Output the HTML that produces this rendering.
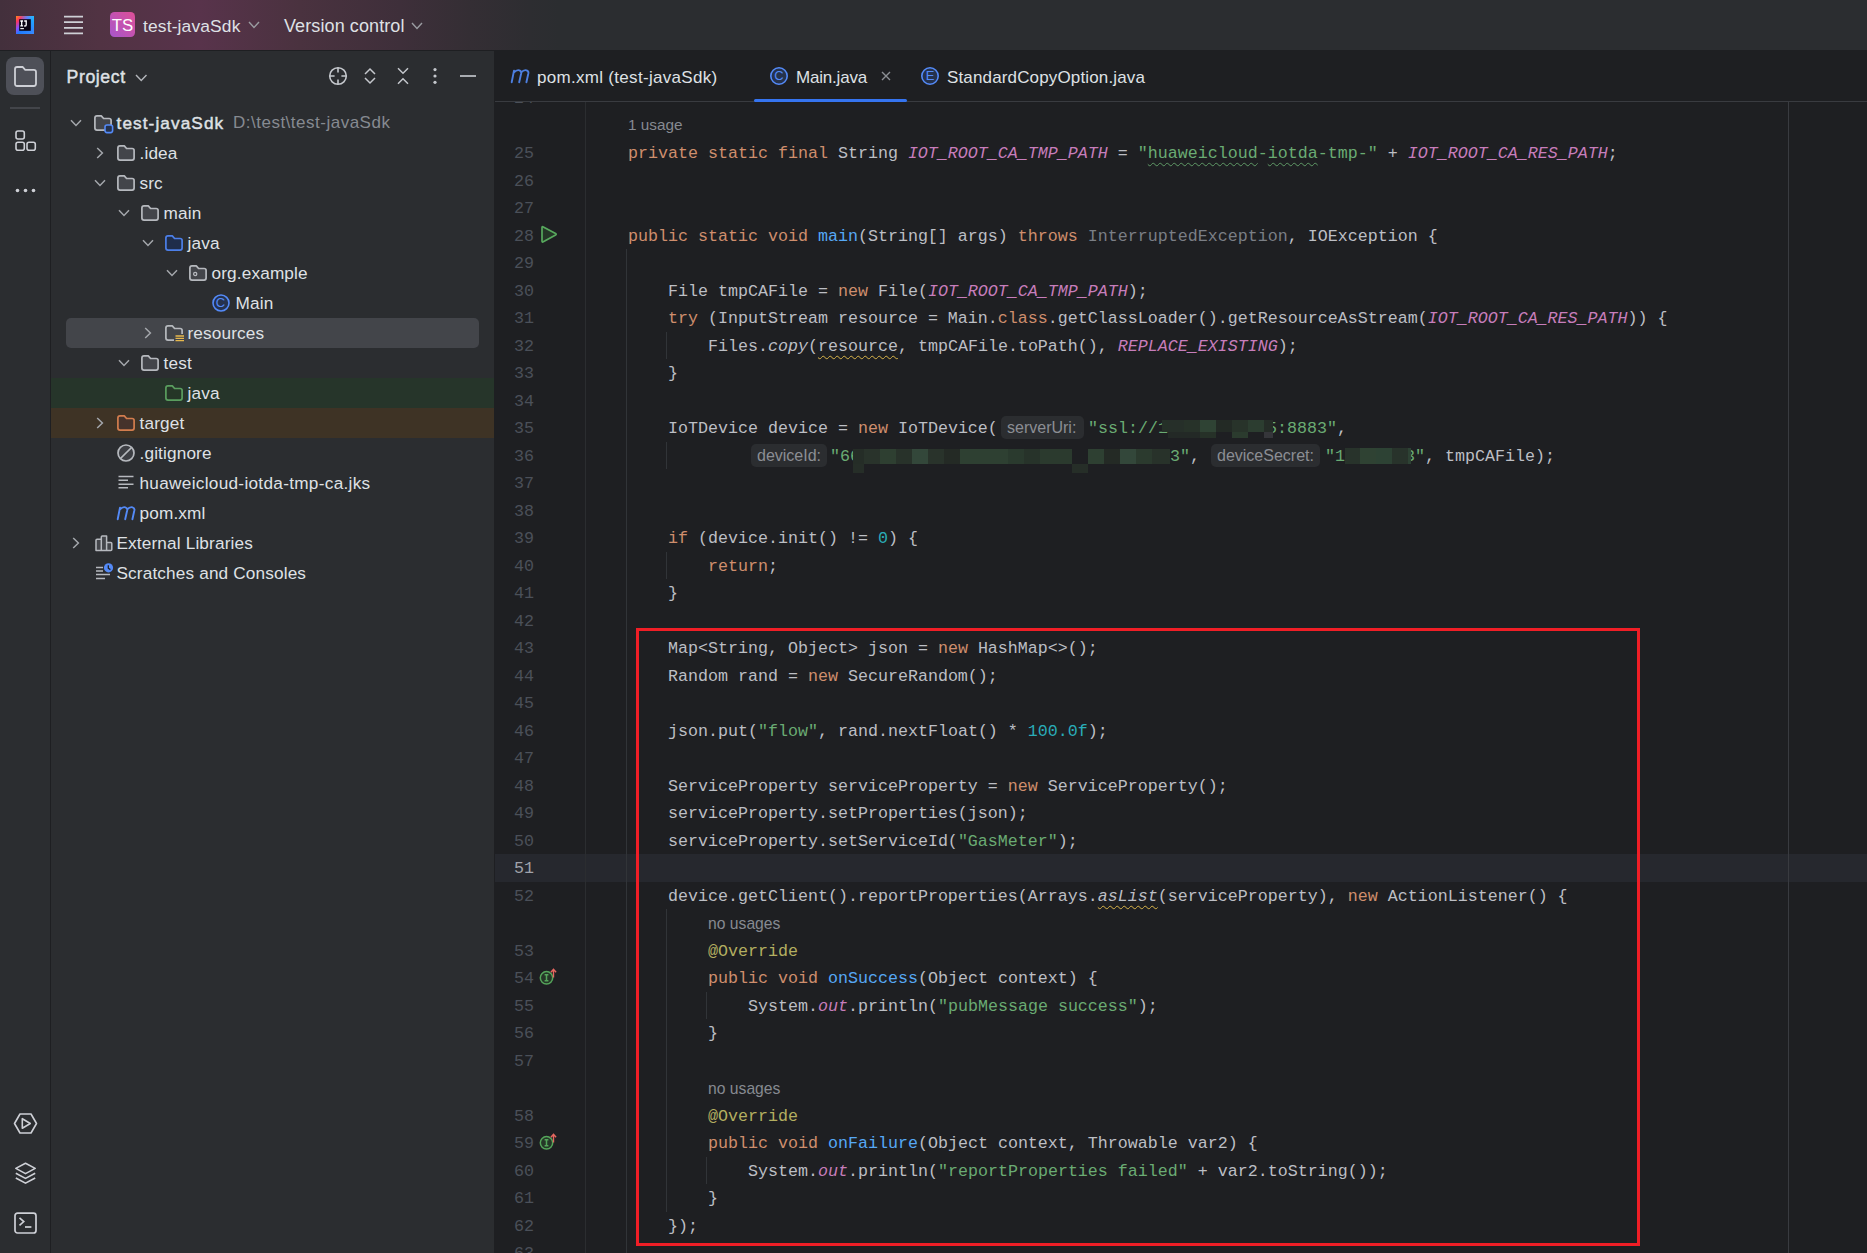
<!DOCTYPE html><html><head><meta charset="utf-8"><style>
*{margin:0;padding:0;box-sizing:border-box}
html,body{width:1867px;height:1253px;overflow:hidden;background:#1e1f22}
body{position:relative;font-family:"Liberation Sans",sans-serif;color:#dfe1e5}
div,span.a,svg{position:absolute}
svg{overflow:visible}
.ui{white-space:pre;font-size:17.2px;line-height:30px;color:#dfe1e5;letter-spacing:0.15px}
.cd{white-space:pre;font-family:"Liberation Mono",monospace;font-size:16.67px;line-height:27.5px;color:#bcbec4;height:27.5px}
.ln{white-space:pre;font-family:"Liberation Mono",monospace;font-size:16.67px;line-height:27.5px;color:#4b5059;width:60px;text-align:right;left:474px}
.k{color:#cf8e6d}.s{color:#6aab73}.n{color:#2aacb8}.st{color:#c77dbb;font-style:italic}.f{color:#56a8f5}.an{color:#b3ae60}.gr{color:#7a7e85}.it{font-style:italic}
.ug{text-decoration:underline wavy #5f9a66;text-decoration-thickness:1px;text-underline-offset:4px}
.uy{text-decoration:underline wavy #d9b44a;text-decoration-thickness:1px;text-underline-offset:4px}
.hint{white-space:pre;font-size:16px;line-height:23px;height:23px;color:#8b8e94;background:#2b2d30;border-radius:5px;padding-left:6px}
.cv{white-space:pre;font-size:15.3px;line-height:27.5px;color:#868a91}
.guide{width:1px;background:#313438}
</style></head><body>
<div style="left:0;top:0;width:1867px;height:50px;background:linear-gradient(90deg,#43303c 0px,#513343 100px,#58334b 200px,#4a323f 300px,#3e2f3a 400px,#342e34 470px,#2d2d31 530px,#2b2d30 560px)"></div>
<div style="left:0;top:50px;width:1867px;height:1px;background:#1e1f22"></div>
<div style="left:0;top:51px;width:50px;height:1202px;background:#2b2d30"></div>
<div style="left:50px;top:51px;width:1px;height:1202px;background:#1e1f22"></div>
<div style="left:51px;top:51px;width:443px;height:1202px;background:#2b2d30"></div>
<div style="left:494px;top:51px;width:1373px;height:1202px;background:#1e1f22"></div>
<div style="left:495px;top:854.25px;width:1372px;height:27.5px;background:#26282e"></div>
<div style="left:585px;top:102px;width:1px;height:1151px;background:#2b2d30"></div>
<div style="left:1788px;top:102px;width:1px;height:1151px;background:#393b40"></div>
<div class="guide" style="left:626px;top:249.25px;height:1023.0px"></div>
<div class="guide" style="left:666px;top:331.75px;height:27.5px"></div>
<div class="guide" style="left:666px;top:441.75px;height:27.5px"></div>
<div class="guide" style="left:666px;top:551.75px;height:27.5px"></div>
<div class="guide" style="left:666px;top:909.25px;height:302.5px"></div>
<div class="guide" style="left:706px;top:991.75px;height:27.5px"></div>
<div class="guide" style="left:706px;top:1156.75px;height:27.5px"></div>
<div class="ln" style="top:85.25px;color:#4b5059">24</div>
<div class="ln" style="top:140.25px;color:#4b5059">25</div>
<div class="ln" style="top:167.75px;color:#4b5059">26</div>
<div class="ln" style="top:195.25px;color:#4b5059">27</div>
<div class="ln" style="top:222.75px;color:#4b5059">28</div>
<div class="ln" style="top:250.25px;color:#4b5059">29</div>
<div class="ln" style="top:277.75px;color:#4b5059">30</div>
<div class="ln" style="top:305.25px;color:#4b5059">31</div>
<div class="ln" style="top:332.75px;color:#4b5059">32</div>
<div class="ln" style="top:360.25px;color:#4b5059">33</div>
<div class="ln" style="top:387.75px;color:#4b5059">34</div>
<div class="ln" style="top:415.25px;color:#4b5059">35</div>
<div class="ln" style="top:442.75px;color:#4b5059">36</div>
<div class="ln" style="top:470.25px;color:#4b5059">37</div>
<div class="ln" style="top:497.75px;color:#4b5059">38</div>
<div class="ln" style="top:525.25px;color:#4b5059">39</div>
<div class="ln" style="top:552.75px;color:#4b5059">40</div>
<div class="ln" style="top:580.25px;color:#4b5059">41</div>
<div class="ln" style="top:607.75px;color:#4b5059">42</div>
<div class="ln" style="top:635.25px;color:#4b5059">43</div>
<div class="ln" style="top:662.75px;color:#4b5059">44</div>
<div class="ln" style="top:690.25px;color:#4b5059">45</div>
<div class="ln" style="top:717.75px;color:#4b5059">46</div>
<div class="ln" style="top:745.25px;color:#4b5059">47</div>
<div class="ln" style="top:772.75px;color:#4b5059">48</div>
<div class="ln" style="top:800.25px;color:#4b5059">49</div>
<div class="ln" style="top:827.75px;color:#4b5059">50</div>
<div class="ln" style="top:855.25px;color:#a1a3ab">51</div>
<div class="ln" style="top:882.75px;color:#4b5059">52</div>
<div class="ln" style="top:937.75px;color:#4b5059">53</div>
<div class="ln" style="top:965.25px;color:#4b5059">54</div>
<div class="ln" style="top:992.75px;color:#4b5059">55</div>
<div class="ln" style="top:1020.25px;color:#4b5059">56</div>
<div class="ln" style="top:1047.75px;color:#4b5059">57</div>
<div class="ln" style="top:1102.75px;color:#4b5059">58</div>
<div class="ln" style="top:1130.25px;color:#4b5059">59</div>
<div class="ln" style="top:1157.75px;color:#4b5059">60</div>
<div class="ln" style="top:1185.25px;color:#4b5059">61</div>
<div class="ln" style="top:1212.75px;color:#4b5059">62</div>
<div class="ln" style="top:1240.25px;color:#4b5059">63</div>
<div class="cv" style="left:628px;top:111.25px;font-size:15.3px">1 usage</div>
<div class="cd" style="left:628px;top:140.25px"><span class="k">private static final </span>String <span class="st">IOT_ROOT_CA_TMP_PATH</span> = <span class="s">"<span class="ug">huaweicloud</span>-<span class="ug">iotda</span>-tmp-"</span> + <span class="st">IOT_ROOT_CA_RES_PATH</span>;</div>
<div class="cd" style="left:628px;top:222.75px"><span class="k">public static void </span><span class="f">main</span>(String[] args) <span class="k">throws </span><span class="gr">InterruptedException</span>, IOException {</div>
<div class="cd" style="left:668px;top:277.75px">File tmpCAFile = <span class="k">new </span>File(<span class="st">IOT_ROOT_CA_TMP_PATH</span>);</div>
<div class="cd" style="left:668px;top:305.25px"><span class="k">try </span>(InputStream resource = Main.<span class="k">class</span>.getClassLoader().getResourceAsStream(<span class="st">IOT_ROOT_CA_RES_PATH</span>)) {</div>
<div class="cd" style="left:708px;top:332.75px">Files.<span class="it">copy</span>(<span class="uy">resource</span>, tmpCAFile.toPath(), <span class="st">REPLACE_EXISTING</span>);</div>
<div class="cd" style="left:668px;top:360.25px">}</div>
<div class="cd" style="left:668px;top:415.25px">IoTDevice device = <span class="k">new </span>IoTDevice(</div>
<div class="cd" style="left:1088px;top:415.25px"><span class="s">"ssl://1</span></div>
<div class="cd" style="left:1267px;top:415.25px"><span class="s">5:8883"</span>,</div>
<div class="cd" style="left:830px;top:442.75px"><span class="s">"66</span></div>
<div class="cd" style="left:1170px;top:442.75px"><span class="s">3"</span>, </div>
<div class="cd" style="left:1325px;top:442.75px"><span class="s">"1</span></div>
<div class="cd" style="left:1405px;top:442.75px"><span class="s">3"</span>, tmpCAFile);</div>
<div class="cd" style="left:668px;top:525.25px"><span class="k">if </span>(device.init() != <span class="n">0</span>) {</div>
<div class="cd" style="left:708px;top:552.75px"><span class="k">return</span>;</div>
<div class="cd" style="left:668px;top:580.25px">}</div>
<div class="cd" style="left:668px;top:635.25px">Map&lt;String, Object&gt; json = <span class="k">new </span>HashMap&lt;&gt;();</div>
<div class="cd" style="left:668px;top:662.75px">Random rand = <span class="k">new </span>SecureRandom();</div>
<div class="cd" style="left:668px;top:717.75px">json.put(<span class="s">"flow"</span>, rand.nextFloat() * <span class="n">100.0f</span>);</div>
<div class="cd" style="left:668px;top:772.75px">ServiceProperty serviceProperty = <span class="k">new </span>ServiceProperty();</div>
<div class="cd" style="left:668px;top:800.25px">serviceProperty.setProperties(json);</div>
<div class="cd" style="left:668px;top:827.75px">serviceProperty.setServiceId(<span class="s">"GasMeter"</span>);</div>
<div class="cd" style="left:668px;top:882.75px">device.getClient().reportProperties(Arrays.<span class="it uy">asList</span>(serviceProperty), <span class="k">new </span>ActionListener() {</div>
<div class="cv" style="left:708px;top:910.25px;font-size:15.7px">no usages</div>
<div class="cd" style="left:708px;top:937.75px"><span class="an">@Override</span></div>
<div class="cd" style="left:708px;top:965.25px"><span class="k">public void </span><span class="f">onSuccess</span>(Object context) {</div>
<div class="cd" style="left:748px;top:992.75px">System.<span class="st">out</span>.println(<span class="s">"pubMessage success"</span>);</div>
<div class="cd" style="left:708px;top:1020.25px">}</div>
<div class="cv" style="left:708px;top:1075.25px;font-size:15.7px">no usages</div>
<div class="cd" style="left:708px;top:1102.75px"><span class="an">@Override</span></div>
<div class="cd" style="left:708px;top:1130.25px"><span class="k">public void </span><span class="f">onFailure</span>(Object context, Throwable var2) {</div>
<div class="cd" style="left:748px;top:1157.75px">System.<span class="st">out</span>.println(<span class="s">"reportProperties failed"</span> + var2.toString());</div>
<div class="cd" style="left:708px;top:1185.25px">}</div>
<div class="cd" style="left:668px;top:1212.75px">});</div>
<div class="hint" style="left:1001px;top:416.0px;width:83px">serverUri:</div>
<div class="hint" style="left:751px;top:443.5px;width:76px">deviceId:</div>
<div class="hint" style="left:1211px;top:443.5px;width:109px">deviceSecret:</div>
<div style="left:1162px;top:420px;width:6px;height:12px;background:#253028"></div>
<div style="left:1168px;top:420px;width:16px;height:12px;background:#262f29"></div>
<div style="left:1184px;top:420px;width:16px;height:12px;background:#273229"></div>
<div style="left:1200px;top:420px;width:16px;height:12px;background:#2f4334"></div>
<div style="left:1216px;top:420px;width:16px;height:12px;background:#232a25"></div>
<div style="left:1232px;top:420px;width:16px;height:12px;background:#28332a"></div>
<div style="left:1248px;top:420px;width:16px;height:12px;background:#2c3d30"></div>
<div style="left:1264px;top:420px;width:9px;height:12px;background:#252c27"></div>
<div style="left:1168px;top:432px;width:16px;height:6px;background:#232926"></div>
<div style="left:1184px;top:432px;width:16px;height:6px;background:#232926"></div>
<div style="left:1200px;top:432px;width:16px;height:6px;background:#263128"></div>
<div style="left:1232px;top:432px;width:16px;height:6px;background:#2b3b2e"></div>
<div style="left:1264px;top:432px;width:9px;height:6px;background:#35363a"></div>
<div style="left:853px;top:449px;width:11px;height:15px;background:#252d27"></div>
<div style="left:864px;top:449px;width:16px;height:15px;background:#29332b"></div>
<div style="left:880px;top:449px;width:16px;height:15px;background:#2e3f31"></div>
<div style="left:896px;top:449px;width:16px;height:15px;background:#28322a"></div>
<div style="left:912px;top:449px;width:16px;height:15px;background:#33473a"></div>
<div style="left:928px;top:449px;width:16px;height:15px;background:#29332b"></div>
<div style="left:944px;top:449px;width:16px;height:15px;background:#242a25"></div>
<div style="left:960px;top:449px;width:16px;height:15px;background:#2e4032"></div>
<div style="left:976px;top:449px;width:16px;height:15px;background:#2e4032"></div>
<div style="left:992px;top:449px;width:16px;height:15px;background:#2e4032"></div>
<div style="left:1008px;top:449px;width:16px;height:15px;background:#2a3a2e"></div>
<div style="left:1024px;top:449px;width:16px;height:15px;background:#27332a"></div>
<div style="left:1040px;top:449px;width:16px;height:15px;background:#2b3a2e"></div>
<div style="left:1056px;top:449px;width:16px;height:15px;background:#2b3a2e"></div>
<div style="left:1088px;top:449px;width:16px;height:15px;background:#2e4032"></div>
<div style="left:1104px;top:449px;width:16px;height:15px;background:#242a25"></div>
<div style="left:1120px;top:449px;width:16px;height:15px;background:#33473a"></div>
<div style="left:1136px;top:449px;width:16px;height:15px;background:#2b3a2e"></div>
<div style="left:1152px;top:449px;width:18px;height:15px;background:#28322a"></div>
<div style="left:853px;top:464px;width:11px;height:9px;background:#262e28"></div>
<div style="left:1072px;top:464px;width:16px;height:9px;background:#262e28"></div>
<div style="left:1345px;top:448px;width:15px;height:16px;background:#28332b"></div>
<div style="left:1360px;top:448px;width:16px;height:16px;background:#2f4233"></div>
<div style="left:1376px;top:448px;width:16px;height:16px;background:#2d4234"></div>
<div style="left:1392px;top:448px;width:16px;height:16px;background:#28332b"></div>
<div style="left:1408px;top:448px;width:3px;height:16px;background:#2d4234"></div>
<div style="left:494px;top:51px;width:1373px;height:50px;background:#1e1f22"></div>
<div style="left:495px;top:101px;width:1372px;height:1px;background:#393b40"></div>
<div style="left:754px;top:99px;width:153px;height:3px;background:#3574f0;border-radius:2px"></div>
<svg style="left:510px;top:69px" width="21" height="15" viewBox="0 0 21 15" ><path d="M1.7 13.2L4 1.6M4 3.4Q6.6 0.6 9.3 1.3Q11.6 2 11.2 4.2L9.2 13.2M11.2 3.4Q13.8 0.6 16.5 1.3Q18.8 2 18.4 4.2L16.4 13.2" fill="none" stroke="#4d7fe0" stroke-width="1.9" stroke-linecap="round" stroke-linejoin="round"/></svg>
<div class="ui" style="left:537px;top:63px;line-height:30px;font-size:17px;letter-spacing:0.3px">pom.xml (test-javaSdk)</div>
<svg style="left:768px;top:65px" width="22" height="22" viewBox="0 0 22 22" ><circle cx="11" cy="11" r="8.2" fill="#25324d" stroke="#548af7" stroke-width="1.6"/></svg>
<div style="left:768px;top:65px;width:22px;height:22px;line-height:22px;text-align:center;font-size:13px;color:#548af7">C</div>
<div class="ui" style="left:796px;top:63px;line-height:30px;font-size:17px;letter-spacing:-0.2px">Main.java</div>
<svg style="left:881px;top:71px" width="10" height="10" viewBox="0 0 10 10" ><path d="M1 1L9 9M9 1L1 9" stroke="#8c8f94" stroke-width="1.4"/></svg>
<svg style="left:919px;top:65px" width="22" height="22" viewBox="0 0 22 22" ><circle cx="11" cy="11" r="8.2" fill="#25324d" stroke="#548af7" stroke-width="1.6"/></svg>
<div style="left:919px;top:65px;width:22px;height:22px;line-height:22px;text-align:center;font-size:13px;color:#548af7">E</div>
<div class="ui" style="left:947px;top:63px;line-height:30px;font-size:17px;letter-spacing:0.15px">StandardCopyOption.java</div>
<svg style="left:16px;top:16px" width="18" height="18" viewBox="0 0 18 18" ><defs><linearGradient id="ijg" x1="0" y1="0" x2="1" y2="1"><stop offset="0" stop-color="#ff8d17"/><stop offset=".18" stop-color="#fe3560"/><stop offset=".38" stop-color="#8a4fff"/><stop offset=".55" stop-color="#1e7bff"/><stop offset="1" stop-color="#3a8cff"/></linearGradient><linearGradient id="ijg2" x1="1" y1="0" x2="0" y2="1"><stop offset="0" stop-color="#22c7ff" stop-opacity=".9"/><stop offset=".45" stop-color="#22c7ff" stop-opacity="0"/></linearGradient></defs><rect x="0" y="0" width="18" height="18" fill="url(#ijg)"/><rect x="0" y="0" width="18" height="18" fill="url(#ijg2)"/><rect x="3.2" y="3.2" width="11.6" height="11.6" fill="#0a0410"/><path d="M4.3 5H7.1M5.7 5V9.9M4.3 9.9H7.1M8.2 5H10.9M10.2 5V8.9Q10.2 10 9.1 10H8.2" stroke="#fff" stroke-width="1.3" fill="none"/><rect x="4.3" y="12.1" width="3.6" height="1.1" fill="#fff"/></svg>
<svg style="left:63px;top:15px" width="21" height="21" viewBox="0 0 21 21" ><path d="M1 1.6H20M1 7.2H20M1 12.8H20M1 18.4H20" stroke="#ced0d6" stroke-width="1.8"/></svg>
<svg style="left:110px;top:12px" width="25" height="25" viewBox="0 0 25 25" ><defs><linearGradient id="tsg" x1="0" y1="1" x2="1" y2="0"><stop offset="0" stop-color="#a756cc"/><stop offset="1" stop-color="#de4f96"/></linearGradient></defs><rect width="25" height="25" rx="4.5" fill="url(#tsg)"/></svg>
<div style="left:110px;top:12px;width:25px;height:25px;line-height:27px;text-align:center;font-size:16.8px;color:#fff">TS</div>
<div class="ui" style="left:143px;top:11px;font-size:17.4px;letter-spacing:0.15px">test-javaSdk</div>
<svg style="left:248px;top:21.3px" width="12" height="7.5" viewBox="0 0 12 7.5" ><path d="M1 1L6.0 6.5L11 1" fill="none" stroke="#9a9ca1" stroke-width="1.4"/></svg>
<div class="ui" style="left:284px;top:11px;font-size:18px;letter-spacing:0.1px">Version control</div>
<svg style="left:411px;top:21.8px" width="12" height="7.5" viewBox="0 0 12 7.5" ><path d="M1 1L6.0 6.5L11 1" fill="none" stroke="#9a9ca1" stroke-width="1.4"/></svg>
<div style="left:6px;top:57px;width:38px;height:38px;border-radius:8px;background:#4e5058"></div>
<svg style="left:14px;top:66px" width="23" height="21" viewBox="0 0 23 21" ><path d="M1 3.2Q1 1 3.2 1H8.6L11.2 3.9H19.8Q22 3.9 22 6.1V17.8Q22 20 19.8 20H3.2Q1 20 1 17.8Z" fill="none" stroke="#ced0d6" stroke-width="1.8"/></svg>
<div style="left:10px;top:107px;width:30px;height:2px;background:#43454a"></div>
<svg style="left:15px;top:130px" width="21" height="21" viewBox="0 0 21 21" ><rect x="1" y="1" width="8.3" height="8" rx="2" fill="none" stroke="#ced0d6" stroke-width="1.6"/><rect x="1" y="12.2" width="8.3" height="8" rx="2" fill="none" stroke="#ced0d6" stroke-width="1.6"/><rect x="12" y="12.2" width="8.3" height="8" rx="2" fill="none" stroke="#ced0d6" stroke-width="1.6"/></svg>
<svg style="left:14px;top:187px" width="24" height="7" viewBox="0 0 24 7" ><circle cx="3.5" cy="3.5" r="1.8" fill="#ced0d6"/><circle cx="11.5" cy="3.5" r="1.8" fill="#ced0d6"/><circle cx="19.5" cy="3.5" r="1.8" fill="#ced0d6"/></svg>
<svg style="left:13px;top:1113px" width="25" height="22" viewBox="0 0 25 22" ><path d="M7 1H18L23.5 10.5L18 20H7L1.5 10.5Z" fill="none" stroke="#ced0d6" stroke-width="1.6" stroke-linejoin="round"/><path d="M9.3 5.7V15.3L17.3 10.5Z" fill="none" stroke="#ced0d6" stroke-width="1.6" stroke-linejoin="round"/></svg>
<svg style="left:14px;top:1162px" width="23" height="23" viewBox="0 0 23 23" ><path d="M11.5 1.2L21.2 6.4L11.5 11.6L1.8 6.4Z" fill="none" stroke="#ced0d6" stroke-width="1.6" stroke-linejoin="round"/><path d="M1.8 11.2L11.5 16.4L21.2 11.2M1.8 16L11.5 21.2L21.2 16" fill="none" stroke="#ced0d6" stroke-width="1.6"/></svg>
<svg style="left:14px;top:1212px" width="23" height="23" viewBox="0 0 23 23" ><rect x="1" y="1.2" width="21" height="19.8" rx="2.5" fill="none" stroke="#ced0d6" stroke-width="1.7"/><path d="M5.5 5.8L9.8 9.6L5.5 13.4" fill="none" stroke="#ced0d6" stroke-width="1.6"/><path d="M11 15H17.4" stroke="#ced0d6" stroke-width="1.7"/></svg>
<div class="ui" style="left:66.5px;top:62px;font-size:17.7px;letter-spacing:0.6px;-webkit-text-stroke:0.45px #dfe1e5">Project</div>
<svg style="left:134.5px;top:74px" width="12.5" height="7.5" viewBox="0 0 12.5 7.5" ><path d="M1 1L6.25 6.5L11.5 1" fill="none" stroke="#b4b7bc" stroke-width="1.4"/></svg>
<svg style="left:328px;top:66px" width="20" height="20" viewBox="0 0 20 20" ><circle cx="10" cy="10" r="8.3" fill="none" stroke="#c4c7cc" stroke-width="1.6"/><path d="M10 1.7V6.6M10 13.4V18.3M1.7 10H6.6M13.4 10H18.3" stroke="#c4c7cc" stroke-width="1.6"/></svg>
<svg style="left:364px;top:68px" width="12" height="16" viewBox="0 0 12 16" ><path d="M1 6L6 1L11 6M1 10L6 15L11 10" fill="none" stroke="#c4c7cc" stroke-width="1.5"/></svg>
<svg style="left:397px;top:67px" width="12" height="18" viewBox="0 0 12 18" ><path d="M1 1.2L6 6.2L11 1.2M1 16.8L6 11.8L11 16.8" fill="none" stroke="#c4c7cc" stroke-width="1.5"/></svg>
<svg style="left:432px;top:67px" width="6" height="18" viewBox="0 0 6 18" ><circle cx="3" cy="2.6" r="1.6" fill="#c4c7cc"/><circle cx="3" cy="9" r="1.6" fill="#c4c7cc"/><circle cx="3" cy="15.3" r="1.6" fill="#c4c7cc"/></svg>
<div style="left:460px;top:75px;width:16px;height:2px;background:#a9acb1"></div>
<div style="left:66px;top:318px;width:413px;height:30px;background:#43454a;border-radius:5px"></div>
<div style="left:51px;top:378px;width:443px;height:30px;background:#26352a"></div>
<div style="left:51px;top:408px;width:443px;height:30px;background:#3e3325"></div>
<svg style="left:69.5px;top:119px" width="12" height="8" viewBox="0 0 12 8" ><path d="M1 1.2L6 6.4L11 1.2" fill="none" stroke="#a4a7ac" stroke-width="1.5"/></svg>
<svg style="left:94px;top:115px" width="18" height="16" viewBox="0 0 18 16" ><path d="M0.9 3Q0.9 0.9 3 0.9H7.3L9.6 3.5H15.1Q17.1 3.5 17.1 5.5V13.1Q17.1 15.1 15.1 15.1H3Q0.9 15.1 0.9 13.1Z" fill="#43454a" stroke="#b6b9be" stroke-width="1.7" stroke-linejoin="round"/></svg>
<svg style="left:104px;top:124px" width="10" height="10" viewBox="0 0 10 10" ><rect x="1" y="1" width="7.6" height="7.6" rx="2" fill="#25324d" stroke="#548af7" stroke-width="1.6"/></svg>
<div class="ui" style="left:116.5px;top:108px;letter-spacing:1.1px;-webkit-text-stroke:0.45px #dfe1e5">test-javaSdk</div>
<div class="ui" style="left:233px;top:108px;color:#868a91;font-size:17px;letter-spacing:0.5px">D:\test\test-javaSdk</div>
<svg style="left:96px;top:147px" width="8" height="12" viewBox="0 0 8 12" ><path d="M1.2 1L6.4 6L1.2 11" fill="none" stroke="#a4a7ac" stroke-width="1.5"/></svg>
<svg style="left:117px;top:145px" width="18" height="16" viewBox="0 0 18 16" ><path d="M0.9 3Q0.9 0.9 3 0.9H7.3L9.6 3.5H15.1Q17.1 3.5 17.1 5.5V13.1Q17.1 15.1 15.1 15.1H3Q0.9 15.1 0.9 13.1Z" fill="#43454a" stroke="#b6b9be" stroke-width="1.7" stroke-linejoin="round"/></svg>
<div class="ui" style="left:139.5px;top:138px;">.idea</div>
<svg style="left:93.5px;top:179px" width="12" height="8" viewBox="0 0 12 8" ><path d="M1 1.2L6 6.4L11 1.2" fill="none" stroke="#a4a7ac" stroke-width="1.5"/></svg>
<svg style="left:117px;top:175px" width="18" height="16" viewBox="0 0 18 16" ><path d="M0.9 3Q0.9 0.9 3 0.9H7.3L9.6 3.5H15.1Q17.1 3.5 17.1 5.5V13.1Q17.1 15.1 15.1 15.1H3Q0.9 15.1 0.9 13.1Z" fill="#43454a" stroke="#b6b9be" stroke-width="1.7" stroke-linejoin="round"/></svg>
<div class="ui" style="left:139.5px;top:168px;">src</div>
<svg style="left:117.5px;top:209px" width="12" height="8" viewBox="0 0 12 8" ><path d="M1 1.2L6 6.4L11 1.2" fill="none" stroke="#a4a7ac" stroke-width="1.5"/></svg>
<svg style="left:141px;top:205px" width="18" height="16" viewBox="0 0 18 16" ><path d="M0.9 3Q0.9 0.9 3 0.9H7.3L9.6 3.5H15.1Q17.1 3.5 17.1 5.5V13.1Q17.1 15.1 15.1 15.1H3Q0.9 15.1 0.9 13.1Z" fill="#43454a" stroke="#b6b9be" stroke-width="1.7" stroke-linejoin="round"/></svg>
<div class="ui" style="left:163.5px;top:198px;">main</div>
<svg style="left:141.5px;top:239px" width="12" height="8" viewBox="0 0 12 8" ><path d="M1 1.2L6 6.4L11 1.2" fill="none" stroke="#a4a7ac" stroke-width="1.5"/></svg>
<svg style="left:165px;top:235px" width="18" height="16" viewBox="0 0 18 16" ><path d="M0.9 3Q0.9 0.9 3 0.9H7.3L9.6 3.5H15.1Q17.1 3.5 17.1 5.5V13.1Q17.1 15.1 15.1 15.1H3Q0.9 15.1 0.9 13.1Z" fill="#1f2d4a" stroke="#4c7fe8" stroke-width="1.7" stroke-linejoin="round"/></svg>
<div class="ui" style="left:187.5px;top:228px;">java</div>
<svg style="left:165.5px;top:269px" width="12" height="8" viewBox="0 0 12 8" ><path d="M1 1.2L6 6.4L11 1.2" fill="none" stroke="#a4a7ac" stroke-width="1.5"/></svg>
<svg style="left:189px;top:265px" width="18" height="16" viewBox="0 0 18 16" ><path d="M0.9 3Q0.9 0.9 3 0.9H7.3L9.6 3.5H15.1Q17.1 3.5 17.1 5.5V13.1Q17.1 15.1 15.1 15.1H3Q0.9 15.1 0.9 13.1Z" fill="#43454a" stroke="#b6b9be" stroke-width="1.7" stroke-linejoin="round"/></svg>
<svg style="left:189px;top:265px" width="18" height="16" viewBox="0 0 18 16" ><circle cx="6.2" cy="9" r="1.6" fill="none" stroke="#b6b9be" stroke-width="1.3"/></svg>
<div class="ui" style="left:211.5px;top:258px;">org.example</div>
<svg style="left:209.5px;top:292px" width="22" height="22" viewBox="0 0 22 22" ><circle cx="11" cy="11" r="8" fill="#25324d" stroke="#548af7" stroke-width="1.6"/></svg>
<div style="left:209.5px;top:292px;width:22px;height:22px;line-height:22px;text-align:center;font-size:13px;color:#548af7">C</div>
<div class="ui" style="left:235.5px;top:288px;">Main</div>
<svg style="left:144px;top:327px" width="8" height="12" viewBox="0 0 8 12" ><path d="M1.2 1L6.4 6L1.2 11" fill="none" stroke="#a4a7ac" stroke-width="1.5"/></svg>
<svg style="left:165px;top:325px" width="20" height="17" viewBox="0 0 20 17" ><path d="M0.9 3Q0.9 0.9 3 0.9H7.3L9.6 3.5H15.1Q17.1 3.5 17.1 5.5V9M9 15.1H3Q0.9 15.1 0.9 13.1V3" fill="none" stroke="#b6b9be" stroke-width="1.7" stroke-linejoin="round"/><path d="M10.5 11H19M10.5 13.3H19M10.5 15.6H19" stroke="#e6b84d" stroke-width="1.3"/></svg>
<div class="ui" style="left:187.5px;top:318px;">resources</div>
<svg style="left:117.5px;top:359px" width="12" height="8" viewBox="0 0 12 8" ><path d="M1 1.2L6 6.4L11 1.2" fill="none" stroke="#a4a7ac" stroke-width="1.5"/></svg>
<svg style="left:141px;top:355px" width="18" height="16" viewBox="0 0 18 16" ><path d="M0.9 3Q0.9 0.9 3 0.9H7.3L9.6 3.5H15.1Q17.1 3.5 17.1 5.5V13.1Q17.1 15.1 15.1 15.1H3Q0.9 15.1 0.9 13.1Z" fill="#43454a" stroke="#b6b9be" stroke-width="1.7" stroke-linejoin="round"/></svg>
<div class="ui" style="left:163.5px;top:348px;">test</div>
<svg style="left:165px;top:385px" width="18" height="16" viewBox="0 0 18 16" ><path d="M0.9 3Q0.9 0.9 3 0.9H7.3L9.6 3.5H15.1Q17.1 3.5 17.1 5.5V13.1Q17.1 15.1 15.1 15.1H3Q0.9 15.1 0.9 13.1Z" fill="#253627" stroke="#5a9e5f" stroke-width="1.7" stroke-linejoin="round"/></svg>
<div class="ui" style="left:187.5px;top:378px;">java</div>
<svg style="left:96px;top:417px" width="8" height="12" viewBox="0 0 8 12" ><path d="M1.2 1L6.4 6L1.2 11" fill="none" stroke="#a4a7ac" stroke-width="1.5"/></svg>
<svg style="left:117px;top:415px" width="18" height="16" viewBox="0 0 18 16" ><path d="M0.9 3Q0.9 0.9 3 0.9H7.3L9.6 3.5H15.1Q17.1 3.5 17.1 5.5V13.1Q17.1 15.1 15.1 15.1H3Q0.9 15.1 0.9 13.1Z" fill="#45322b" stroke="#d27d4e" stroke-width="1.7" stroke-linejoin="round"/></svg>
<div class="ui" style="left:139.5px;top:408px;">target</div>
<svg style="left:116px;top:443px" width="20" height="20" viewBox="0 0 20 20" ><circle cx="10" cy="10" r="8" fill="#3d3f44" stroke="#b6b9be" stroke-width="1.7"/><path d="M4.6 15.4L15.4 4.6" stroke="#b6b9be" stroke-width="1.5"/></svg>
<div class="ui" style="left:139.5px;top:438px;">.gitignore</div>
<svg style="left:117px;top:475px" width="18" height="16" viewBox="0 0 18 16" ><path d="M1.5 1.6H16.5M1.5 5.2H11M1.5 9.2H16.5M1.5 12.7H11" stroke="#b6b9be" stroke-width="1.5"/></svg>
<div class="ui" style="left:139.5px;top:468px;letter-spacing:0.3px">huaweicloud-iotda-tmp-ca.jks</div>
<svg style="left:116px;top:505.5px" width="21" height="15" viewBox="0 0 21 15" ><path d="M1.7 13.2L4 1.6M4 3.4Q6.6 0.6 9.3 1.3Q11.6 2 11.2 4.2L9.2 13.2M11.2 3.4Q13.8 0.6 16.5 1.3Q18.8 2 18.4 4.2L16.4 13.2" fill="none" stroke="#548af7" stroke-width="1.9" stroke-linecap="round" stroke-linejoin="round"/></svg>
<div class="ui" style="left:139.5px;top:498px;">pom.xml</div>
<svg style="left:72px;top:537px" width="8" height="12" viewBox="0 0 8 12" ><path d="M1.2 1L6.4 6L1.2 11" fill="none" stroke="#a4a7ac" stroke-width="1.5"/></svg>
<svg style="left:95px;top:535px" width="18" height="17" viewBox="0 0 18 17" ><path d="M1 15.5V5.2Q1 4.2 2 4.2H6.3V15.5ZM6.3 15.5V2Q6.3 1 7.3 1H11.6V15.5ZM11.6 15.5V7.6H15.8Q16.8 7.6 16.8 8.6V14.5Q16.8 15.5 15.8 15.5Z" fill="#43454a" stroke="#b6b9be" stroke-width="1.5" stroke-linejoin="round"/></svg>
<div class="ui" style="left:116.5px;top:528px;">External Libraries</div>
<svg style="left:95px;top:563px" width="20" height="18" viewBox="0 0 20 18" ><path d="M1 4.4H8M1 8H8M1 11.6H15M1 15.4H10" stroke="#b6b9be" stroke-width="1.5"/><circle cx="13.5" cy="4.8" r="4.6" fill="#548af7"/><path d="M13.3 2.2V5.2L15.4 6.6" fill="none" stroke="#1e1f22" stroke-width="1.3"/></svg>
<div class="ui" style="left:116.5px;top:558px;">Scratches and Consoles</div>
<svg style="left:540px;top:225px" width="18" height="19" viewBox="0 0 18 19" ><path d="M2 2.6Q2 1.2 3.3 1.9L15.6 8.6Q16.8 9.3 15.6 10L3.3 16.8Q2 17.5 2 16.1Z" fill="#253627" stroke="#57a85d" stroke-width="1.7" stroke-linejoin="round"/></svg>
<svg style="left:538px;top:967.0px" width="22" height="20" viewBox="0 0 22 20" ><circle cx="8.5" cy="10.8" r="6.2" fill="#253627" stroke="#55a55b" stroke-width="1.5"/><path d="M6.6 7.8H10.4M8.5 7.8V13.8M6.6 13.8H10.4" stroke="#55a55b" stroke-width="1.5"/><path d="M15.5 10.6V2.6M12.9 5.2L15.5 2.2L18.1 5.2" fill="none" stroke="#e5675f" stroke-width="1.4"/></svg>
<svg style="left:538px;top:1132.0px" width="22" height="20" viewBox="0 0 22 20" ><circle cx="8.5" cy="10.8" r="6.2" fill="#253627" stroke="#55a55b" stroke-width="1.5"/><path d="M6.6 7.8H10.4M8.5 7.8V13.8M6.6 13.8H10.4" stroke="#55a55b" stroke-width="1.5"/><path d="M15.5 10.6V2.6M12.9 5.2L15.5 2.2L18.1 5.2" fill="none" stroke="#e5675f" stroke-width="1.4"/></svg>
<div style="left:636px;top:628px;width:1004px;height:618px;border:3px solid #f01e26"></div>
</body></html>
